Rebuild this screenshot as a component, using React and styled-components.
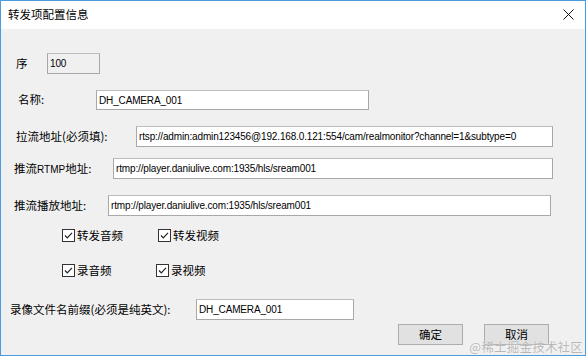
import React from 'react'
import styled, { createGlobalStyle } from 'styled-components'

const GlobalStyle = createGlobalStyle`
  html, body {
    margin: 0;
    padding: 0;
    background: #f0f0f0;
    overflow: hidden;
  }
`

const cjk = `"Noto Sans CJK SC", "Microsoft YaHei", sans-serif`
const latin = `"Liberation Sans", Arial, sans-serif`

const Window = styled.div`
  position: relative;
  box-sizing: border-box;
  width: 586px;
  height: 356px;
  border: 1px solid #4a9be0;
  background: #f0f0f0;
  display: flex;
  flex-direction: column;
  font-family: ${cjk};
  color: #000;
`

const TitleBar = styled.div`
  height: 28px;
  background: #fff;
  display: flex;
  align-items: center;
  justify-content: space-between;
  padding: 0 11px 0 7px;
  flex-shrink: 0;
`

const Title = styled.span`
  font-size: 11.5px;
  line-height: 1;
  margin-top: -1px;
`

const CloseButton = styled.div`
  width: 12px;
  height: 12px;
  display: flex;
  align-items: center;
  justify-content: center;
  margin-top: -2px;
`

const Body = styled.div`
  flex: 1;
  display: flex;
  flex-direction: column;
`

const Row = styled.div`
  display: flex;
  align-items: center;
  margin-top: ${p => p.$mt}px;
  padding-left: ${p => p.$pl}px;
  height: ${p => p.$h || 21}px;
`

const Label = styled.span`
  width: ${p => p.$w}px;
  flex-shrink: 0;
  font-size: 11.5px;
  line-height: 1;
  white-space: nowrap;
`

const Small = styled.span`
  font-family: ${latin};
  font-size: 10px;
`

const TextBox = styled.div`
  box-sizing: border-box;
  width: ${p => p.$w}px;
  height: 100%;
  background: ${p => (p.$readonly ? '#f0f0f0' : '#fff')};
  border: 1px solid #a8a8a8;
  border-top-color: #bcbcbc;
  display: flex;
  align-items: center;
  padding-left: 2px;
  font-family: ${latin};
  font-size: 10px;
  letter-spacing: -0.15px;
  white-space: nowrap;
  overflow: hidden;
`

const CheckItem = styled.label`
  width: ${p => p.$w}px;
  display: flex;
  align-items: center;
  gap: 2px;
  font-size: 11.5px;
  line-height: 1;
  flex-shrink: 0;
`

const Box = styled.span`
  box-sizing: border-box;
  width: 13px;
  height: 13px;
  border: 1px solid #333;
  background: #fff;
  display: flex;
  align-items: center;
  justify-content: center;
`

const Button = styled.div`
  box-sizing: border-box;
  width: 65px;
  height: 21px;
  background: #e1e1e1;
  border: 1px solid #adadad;
  display: flex;
  align-items: center;
  justify-content: center;
  font-size: 11.5px;
  line-height: 1;
`

const ButtonRow = styled(Row)`
  gap: 21px;
`

const Watermark = styled.span`
  position: absolute;
  right: 2px;
  bottom: 2px;
  font-family: "Noto Sans CJK SC", serif;
  font-size: 12.5px;
  line-height: 1;
  color: #b8b8b8;
  text-shadow: 0 0 1px #fff;
  letter-spacing: 0.2px;
`

const CheckBox = ({ label, w }) => (
  <CheckItem $w={w}>
    <Box>
      <svg width="11" height="11" viewBox="0 0 11 11">
        <path d="M2 5.5 L4.3 7.8 L9 2.8" fill="none" stroke="#222" strokeWidth="1.2" />
      </svg>
    </Box>
    {label}
  </CheckItem>
)

export default function App() {
  return (
    <>
      <GlobalStyle />
      <Window>
        <TitleBar>
          <Title>转发项配置信息</Title>
          <CloseButton>
            <svg width="11" height="11" viewBox="0 0 11 11">
              <path d="M0.5 0.5 L10.5 10.5 M10.5 0.5 L0.5 10.5" stroke="#111" strokeWidth="1" />
            </svg>
          </CloseButton>
        </TitleBar>
        <Body>
          <Row $mt={24} $pl={15}>
            <Label $w={31}>序</Label>
            <TextBox $w={53} $readonly>100</TextBox>
          </Row>
          <Row $mt={16} $pl={17} $h={20}>
            <Label $w={78}>名称:</Label>
            <TextBox $w={273}>DH_CAMERA_001</TextBox>
          </Row>
          <Row $mt={16} $pl={15}>
            <Label $w={120}>拉流地址(必须填):</Label>
            <TextBox $w={417}>rtsp://admin:admin123456@192.168.0.121:554/cam/realmonitor?channel=1&amp;subtype=0</TextBox>
          </Row>
          <Row $mt={11} $pl={13}>
            <Label $w={99}>推流<Small>RTMP</Small>地址:</Label>
            <TextBox $w={440}>rtmp://player.daniulive.com:1935/hls/sream001</TextBox>
          </Row>
          <Row $mt={16} $pl={13}>
            <Label $w={94}>推流播放地址:</Label>
            <TextBox $w={443}>rtmp://player.daniulive.com:1935/hls/sream001</TextBox>
          </Row>
          <Row $mt={13} $pl={61} $h={13}>
            <CheckBox w={96} label="转发音频" />
            <CheckBox w={90} label="转发视频" />
          </Row>
          <Row $mt={22} $pl={61} $h={13}>
            <CheckBox w={94} label="录音频" />
            <CheckBox w={90} label="录视频" />
          </Row>
          <Row $mt={22} $pl={9}>
            <Label $w={186}>录像文件名前缀(必须是纯英文):</Label>
            <TextBox $w={158}>DH_CAMERA_001</TextBox>
          </Row>
          <ButtonRow $mt={4} $pl={397}>
            <Button>确定</Button>
            <Button>取消</Button>
          </ButtonRow>
        </Body>
        <Watermark>@稀土掘金技术社区</Watermark>
      </Window>
    </>
  )
}
